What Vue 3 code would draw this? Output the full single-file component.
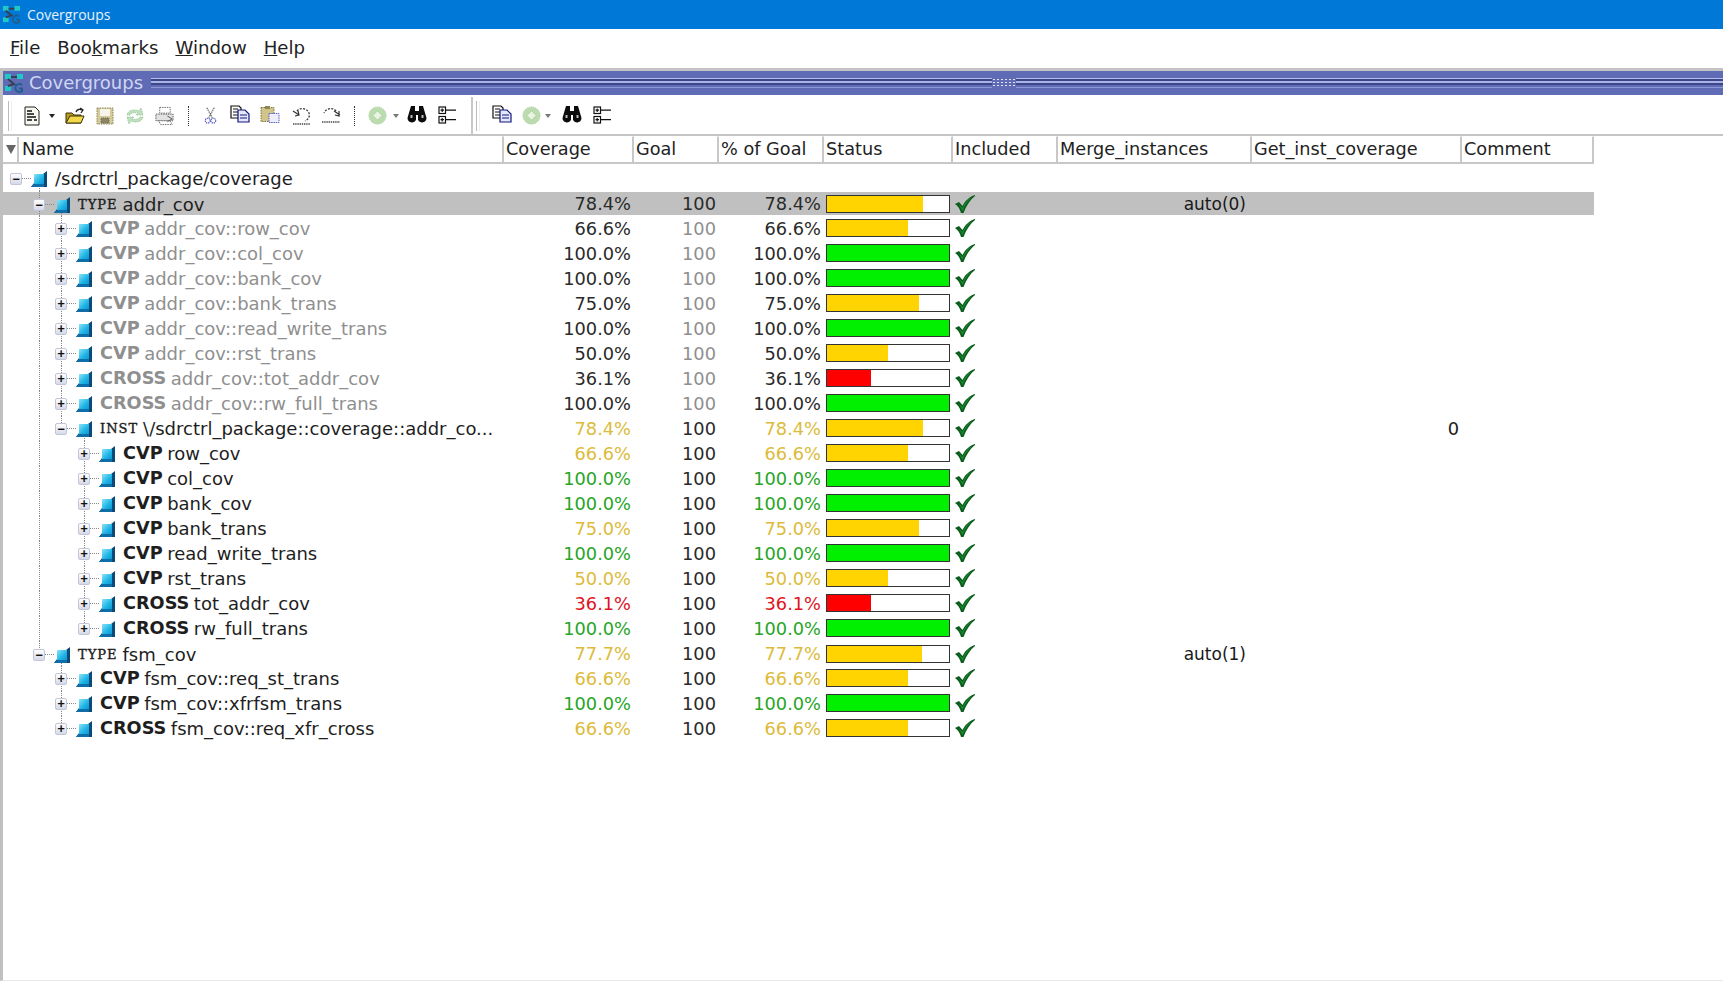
<script setup>
const Y = '#dcbb3a'
const G = '#27a527'
const R = '#e0141c'

// depth, tag, name, coverage, percent, style
const rows = [
  { d: 0, open: true, name: '/sdrctrl_package/coverage', guides: ['g1s'] },
  { d: 1, open: true, tag: 'TYPE', tagSerif: true, name: 'addr_cov', cov: 78.4, selected: true, merge: 'auto(0)', guides: ['g1', 'g2s'] },
  { d: 2, tag: 'CVP', name: 'addr_cov::row_cov', cov: 66.6, dim: true, guides: ['g1', 'g2'] },
  { d: 2, tag: 'CVP', name: 'addr_cov::col_cov', cov: 100, dim: true, guides: ['g1', 'g2'] },
  { d: 2, tag: 'CVP', name: 'addr_cov::bank_cov', cov: 100, dim: true, guides: ['g1', 'g2'] },
  { d: 2, tag: 'CVP', name: 'addr_cov::bank_trans', cov: 75, dim: true, guides: ['g1', 'g2'] },
  { d: 2, tag: 'CVP', name: 'addr_cov::read_write_trans', cov: 100, dim: true, guides: ['g1', 'g2'] },
  { d: 2, tag: 'CVP', name: 'addr_cov::rst_trans', cov: 50, dim: true, guides: ['g1', 'g2'] },
  { d: 2, tag: 'CROSS', name: 'addr_cov::tot_addr_cov', cov: 36.1, dim: true, guides: ['g1', 'g2'] },
  { d: 2, tag: 'CROSS', name: 'addr_cov::rw_full_trans', cov: 100, dim: true, guides: ['g1', 'g2'] },
  { d: 2, open: true, tag: 'INST', tagSerif: true, name: '\\/sdrctrl_package::coverage::addr_co...', cov: 78.4, color: true, inst: '0', guides: ['g1', 'g2e', 'g3s'] },
  { d: 3, tag: 'CVP', name: 'row_cov', cov: 66.6, color: true, guides: ['g1', 'g3'] },
  { d: 3, tag: 'CVP', name: 'col_cov', cov: 100, color: true, guides: ['g1', 'g3'] },
  { d: 3, tag: 'CVP', name: 'bank_cov', cov: 100, color: true, guides: ['g1', 'g3'] },
  { d: 3, tag: 'CVP', name: 'bank_trans', cov: 75, color: true, guides: ['g1', 'g3'] },
  { d: 3, tag: 'CVP', name: 'read_write_trans', cov: 100, color: true, guides: ['g1', 'g3'] },
  { d: 3, tag: 'CVP', name: 'rst_trans', cov: 50, color: true, guides: ['g1', 'g3'] },
  { d: 3, tag: 'CROSS', name: 'tot_addr_cov', cov: 36.1, color: true, guides: ['g1', 'g3'] },
  { d: 3, tag: 'CROSS', name: 'rw_full_trans', cov: 100, color: true, guides: ['g1', 'g3e'] },
  { d: 1, open: true, tag: 'TYPE', tagSerif: true, name: 'fsm_cov', cov: 77.7, color: true, merge: 'auto(1)', guides: ['g1e', 'g2s'] },
  { d: 2, tag: 'CVP', name: 'fsm_cov::req_st_trans', cov: 66.6, color: true, guides: ['g2'] },
  { d: 2, tag: 'CVP', name: 'fsm_cov::xfrfsm_trans', cov: 100, color: true, guides: ['g2'] },
  { d: 2, tag: 'CROSS', name: 'fsm_cov::req_xfr_cross', cov: 66.6, color: true, guides: ['g2e'] },
]

const headers = ['Coverage', 'Goal', '% of Goal', 'Status', 'Included', 'Merge_instances', 'Get_inst_coverage', 'Comment']

function pct(n) {
  return n.toFixed(1) + '%'
}
function barColor(n) {
  if (n >= 100) return '#00f000'
  if (n >= 50) return '#ffd400'
  return '#ff0000'
}
function textColor(n) {
  if (n >= 100) return G
  if (n >= 50) return Y
  return R
}
</script>

<template>
  <div class="app">
    <svg width="0" height="0" class="defs">
      <defs>
        <linearGradient id="cube" x1="0" y1="0" x2="1" y2="1">
          <stop offset="0" stop-color="#8ae4fa" />
          <stop offset="0.6" stop-color="#1fb4e6" />
          <stop offset="1" stop-color="#0f95d0" />
        </linearGradient>
        <symbol id="i-cube" viewBox="0 0 16 16">
          <path d="M0 16 L3 12 L3 3 L12 3 L16 0 L16 16 Z" fill="#0a4a78" />
          <rect x="3" y="3" width="10" height="10" fill="url(#cube)" />
          <path d="M0 16 L3 13 L13 13 L13 16 Z" fill="#0d6ea8" />
        </symbol>
        <symbol id="i-logo" viewBox="0 0 20 20">
          <rect x="1" y="1" width="6" height="5" fill="#1fc7c7" />
          <rect x="13" y="1" width="6" height="5" fill="#1fc7c7" />
          <rect x="1" y="13" width="6" height="5" fill="#1fc7c7" />
          <path d="M7 4 H13 M4 6 L10 11 L4 13" stroke="#3a3f50" stroke-width="2" fill="none" />
          <path d="M18 12 A4 4 0 1 0 18 18 V15.5 H15" stroke="#1f5f8f" stroke-width="2" fill="none" />
        </symbol>
        <symbol id="i-new" viewBox="0 0 18 20">
          <path d="M2 1 H12 L16 5 V19 H2 Z" fill="#f7f7f2" stroke="#222" />
          <path d="M4 5 H9 M4 8 H11 M4 11 H13 M4 14 H9 M11 14 H14" stroke="#111" stroke-width="1.3" />
        </symbol>
        <symbol id="i-folder" viewBox="0 0 20 18">
          <path d="M1 6 H7 L9 8 H16 V16 H1 Z" fill="#b89a1e" stroke="#3a3208" />
          <path d="M1 16 L5 9 H19 L16 16 Z" fill="#f3d94a" stroke="#3a3208" />
          <path d="M11 5 C12 2 15 2 17 3 M15 1 L18 3 L16 6" stroke="#222" stroke-width="1.3" fill="none" />
        </symbol>
        <symbol id="i-save" viewBox="0 0 18 18">
          <rect x="1" y="1" width="16" height="16" fill="#d4cb98" stroke="#8a8358" stroke-dasharray="1.5 1" />
          <rect x="4" y="2" width="10" height="7" fill="#f6f4ea" />
          <rect x="5" y="11" width="8" height="5" fill="#8a8468" stroke="#6d6850" stroke-dasharray="1 1" />
        </symbol>
        <symbol id="i-sync" viewBox="0 0 20 20">
          <path d="M2 9 C3 4 9 3 14 5 L16 2 L18 9 L11 9 L13 7 C9 6 6 7 5 9 Z" fill="#bfe0bf" stroke="#93c193" stroke-dasharray="1.5 .8" stroke-width=".8" />
          <path d="M18 11 C17 16 11 17 6 15 L4 18 L2 11 L9 11 L7 13 C11 14 14 13 15 11 Z" fill="#bfe0bf" stroke="#93c193" stroke-dasharray="1.5 .8" stroke-width=".8" />
        </symbol>
        <symbol id="i-print" viewBox="0 0 22 20">
          <path d="M6 1 H17 V7 H6 Z" fill="#fff" stroke="#666" stroke-dasharray="1.5 1" />
          <path d="M2 8 H20 V15 H2 Z" fill="#e2e2e2" stroke="#555" stroke-dasharray="1.5 1" />
          <path d="M5 15 H17 L19 19 H7 Z" fill="#fff" stroke="#666" stroke-dasharray="1.5 1" />
          <path d="M14 10 L19 13 L14 16" stroke="#555" fill="none" />
        </symbol>
        <symbol id="i-cut" viewBox="0 0 14 20">
          <path d="M3 1 L9 12 M11 1 L5 12" stroke="#555" stroke-dasharray="1.5 .8" stroke-width="1.2" />
          <circle cx="4" cy="15" r="2.6" fill="none" stroke="#4a4fc4" stroke-dasharray="1.4 .8" stroke-width="1.2" />
          <circle cx="10" cy="15" r="2.6" fill="none" stroke="#4a4fc4" stroke-dasharray="1.4 .8" stroke-width="1.2" />
        </symbol>
        <symbol id="i-copy" viewBox="0 0 20 18">
          <path d="M1 1 H9 L11 3 V13 H1 Z" fill="#fff" stroke="#111" stroke-width="1.2" />
          <path d="M3 4 H8 M3 7 H8 M3 10 H8" stroke="#111" />
          <path d="M8 5 H15 L19 9 V17 H8 Z" fill="#e4e8ff" stroke="#15157a" stroke-width="1.2" />
          <path d="M10 10 H17 M10 13 H17" stroke="#15157a" />
        </symbol>
        <symbol id="i-paste" viewBox="0 0 20 18">
          <rect x="1" y="2" width="13" height="14" fill="#d0c488" stroke="#7d7446" stroke-dasharray="1.5 1" />
          <rect x="5" y="0.5" width="5" height="3" fill="#8e8752" />
          <rect x="9" y="8" width="10" height="9" fill="#eef" stroke="#5a5fc4" stroke-dasharray="1.5 .8" />
        </symbol>
        <symbol id="i-undo" viewBox="0 0 20 20">
          <path d="M5 5 C8 1 15 2 17 7 C18 10 17 13 13 15" fill="none" stroke="#333" stroke-width="1.3" stroke-dasharray="2 1.4" />
          <path d="M1 5 L7 9 M3 10 L7 9 L6 5" fill="none" stroke="#333" stroke-width="1.2" />
          <path d="M1 18 H18" stroke="#444" stroke-width="1.4" stroke-dasharray="1.4 .8" />
        </symbol>
        <symbol id="i-redo" viewBox="0 0 20 20">
          <path d="M15 5 C12 1 5 2 3 7" fill="none" stroke="#333" stroke-width="1.3" stroke-dasharray="2 1.4" />
          <path d="M13 5 L19 9 M14 9 L18 10 L18 5" fill="none" stroke="#333" stroke-width="1.2" />
          <path d="M1 16 H19" stroke="#444" stroke-width="1.4" stroke-dasharray="1.4 .8" />
        </symbol>
        <symbol id="i-disc" viewBox="0 0 20 20">
          <circle cx="10" cy="10" r="9" fill="#bcdcb0" stroke="#a6cf9a" stroke-dasharray="1.5 .8" />
          <path d="M10 5 L15 10 L10 15 L5 10 Z" fill="#e9f4e3" stroke="#a6cf9a" />
        </symbol>
        <symbol id="i-find" viewBox="0 0 20 18">
          <path d="M4 1 H8 V6 H12 V1 H16 L19.5 13 A4.5 4.5 0 0 1 11 15 V10 H9 V15 A4.5 4.5 0 0 1 .5 13 Z" fill="#0c0c0c" />
          <rect x="3.5" y="10" width="2" height="3" fill="#bbb" />
          <rect x="14.5" y="10" width="2" height="3" fill="#bbb" />
        </symbol>
        <symbol id="i-tree" viewBox="0 0 18 18">
          <rect x="1" y="1" width="6.5" height="6.5" fill="#fff" stroke="#111" stroke-width="1.2" />
          <rect x="1" y="10.5" width="6.5" height="6.5" fill="#fff" stroke="#111" stroke-width="1.2" />
          <path d="M2.5 4.2 H6 M4.2 2.5 V6 M2.5 13.7 H6 M4.2 12 V15.5 M7.5 4.2 H18 M7.5 13.7 H18" stroke="#111" stroke-width="1.2" />
        </symbol>
      </defs>
    </svg>

    <header class="titlebar">
      <svg class="title-icon"><use href="#i-logo" /></svg>
      <span>Covergroups</span>
    </header>

    <nav class="menubar">
      <span><u>F</u>ile</span>
      <span>Boo<u>k</u>marks</span>
      <span><u>W</u>indow</span>
      <span><u>H</u>elp</span>
    </nav>

    <div class="panel">
      <div class="panel-title">
        <svg class="panel-icon"><use href="#i-logo" /></svg>
        <span class="panel-name">Covergroups</span>
        <div class="drag-lines">
          <div class="grip"></div>
        </div>
      </div>

      <div class="toolbar">
        <div class="tool-group first">
          <div class="handle"></div>
          <svg class="ic ic-new"><use href="#i-new" /></svg>
          <span class="drop dark"></span>
          <svg class="ic ic-folder"><use href="#i-folder" /></svg>
          <svg class="ic ic-save"><use href="#i-save" /></svg>
          <svg class="ic ic-sync"><use href="#i-sync" /></svg>
          <svg class="ic ic-print"><use href="#i-print" /></svg>
          <span class="sep"></span>
          <svg class="ic ic-cut"><use href="#i-cut" /></svg>
          <svg class="ic ic-copy"><use href="#i-copy" /></svg>
          <svg class="ic ic-paste"><use href="#i-paste" /></svg>
          <svg class="ic ic-undo"><use href="#i-undo" /></svg>
          <svg class="ic ic-redo"><use href="#i-redo" /></svg>
          <span class="sep"></span>
          <svg class="ic ic-disc"><use href="#i-disc" /></svg>
          <span class="drop"></span>
          <svg class="ic ic-find"><use href="#i-find" /></svg>
          <svg class="ic ic-tree"><use href="#i-tree" /></svg>
        </div>
        <div class="tool-group second">
          <div class="handle"></div>
          <svg class="ic ic-copy"><use href="#i-copy" /></svg>
          <svg class="ic ic-disc"><use href="#i-disc" /></svg>
          <span class="drop"></span>
          <svg class="ic ic-find"><use href="#i-find" /></svg>
          <svg class="ic ic-tree"><use href="#i-tree" /></svg>
        </div>
      </div>

      <div class="thead">
        <div class="th th-name">
          <span class="sort"></span>
          <span class="th-label">Name</span>
        </div>
        <div v-for="h in headers" :key="h" class="th">{{ h }}</div>
      </div>

      <div class="tbody">
        <div v-for="(r, i) in rows" :key="i" class="row" :class="{ selected: r.selected, dim: r.dim }">
          <i v-for="g in r.guides" :key="g" class="guide" :class="g"></i>
          <div class="cell name" :class="'d' + r.d">
            <span class="exp">{{ r.open ? '−' : '+' }}</span>
            <span class="dash"></span>
            <svg class="cube"><use href="#i-cube" /></svg>
            <span v-if="r.tag" class="tag" :class="{ serif: r.tagSerif }">{{ r.tag }}</span>
            <span class="label">{{ r.name }}</span>
          </div>
          <template v-if="r.cov !== undefined">
            <div class="cell num" :style="r.color ? { color: textColor(r.cov) } : null">{{ pct(r.cov) }}</div>
            <div class="cell num goal">100</div>
            <div class="cell num" :style="r.color ? { color: textColor(r.cov) } : null">{{ pct(r.cov) }}</div>
            <div class="cell status">
              <div class="bar">
                <div class="fill" :style="{ width: r.cov + '%', background: barColor(r.cov) }"></div>
              </div>
            </div>
            <div class="cell included">
              <svg class="check" viewBox="0 0 20 18">
                <path d="M0 9 L4 7 L7.5 11 C10 6 14 2 20 0 L20 1 C15 5 11 11 8.5 18 L6 18 C5 14 3 11 0 9 Z" fill="#0a5c1c" />
                <path d="M3.5 9 L7.5 13 C10 8 13 4 17 2 C13 6 10 10 7.5 16 Z" fill="#1a8a2e" />
              </svg>
            </div>
            <div class="cell merge">{{ r.merge }}</div>
            <div class="cell inst">{{ r.inst }}</div>
            <div class="cell"></div>
          </template>
        </div>
      </div>
    </div>
  </div>
</template>

<style scoped>
.app {
  width: 1723px;
  height: 981px;
  overflow: hidden;
  background: #fff;
  font-family: "DejaVu Sans", sans-serif;
  color: #1a1a1a;
  display: flex;
  flex-direction: column;
}
.defs {
  position: absolute;
}
.titlebar {
  height: 29px;
  background: #0078d7;
  color: #e8f2fb;
  display: flex;
  align-items: center;
  gap: 6px;
  padding-left: 2px;
  font-family: "Open Sans", sans-serif;
  font-size: 14px;
  flex: none;
}
.title-icon {
  width: 19px;
  height: 19px;
}
.menubar {
  height: 37px;
  padding: 0 0 2px 10px;
  display: flex;
  align-items: center;
  gap: 17px;
  font-size: 18.1px;
  flex: none;
  color: #222;
}
.panel {
  flex: 1;
  border-left: 3px solid #c0c0c0;
  border-top: 3px solid #c4c4c4;
  border-bottom: 1px solid #e8e8e8;
  display: flex;
  flex-direction: column;
}
.panel-title {
  height: 24px;
  background: #5f6bb5;
  display: flex;
  align-items: center;
  padding-left: 1px;
  color: #cfd6f2;
  font-size: 18px;
  flex: none;
}
.panel-icon {
  width: 20px;
  height: 20px;
}
.panel-name {
  margin: -2px 0 0 5px;
}
.drag-lines {
  flex: 1;
  height: 10px;
  margin-left: 8px;
  position: relative;
  box-sizing: border-box;
  border-top: 1px solid #b4bcec;
  border-bottom: 1px solid #8d97d8;
  background: linear-gradient(#3d4686 0 2px, #aab3e8 2px 4px, #3d4686 4px 6px, #5f6bb5 6px);
}
.grip {
  position: absolute;
  left: 841px;
  top: -1px;
  width: 24px;
  height: 10px;
  background-color: #5f6bb5;
  background-image: radial-gradient(circle, #dfe3f8 1px, transparent 1px);
  background-size: 4px 3px;
}
.toolbar {
  height: 41px;
  padding-top: 2px;
  display: flex;
  align-items: stretch;
  flex: none;
  border-bottom: 2px solid #c4c4c4;
  box-sizing: border-box;
}
.tool-group {
  display: flex;
  align-items: center;
  position: relative;
}
.first {
  width: 468px;
  border-right: 2px solid #c8c8c8;
  box-sizing: content-box;
}
.second {
  flex: 1;
  margin-left: -2px;
}
.handle {
  width: 2px;
  height: 30px;
  margin-left: 5px;
  border-left: 1px solid #bbb;
  border-right: 1px solid #eee;
}
.ic {
  flex: none;
}
.ic-new { width: 18px; height: 20px; margin-left: 11px; }
.ic-folder { width: 20px; height: 18px; margin-left: 10px; }
.ic-save { width: 18px; height: 18px; margin-left: 11px; }
.ic-sync { width: 20px; height: 20px; margin-left: 11px; }
.ic-print { width: 21px; height: 20px; margin-left: 9px; }
.ic-cut { width: 13px; height: 20px; margin-left: 15px; }
.ic-copy { width: 20px; height: 18px; margin-left: 13px; margin-top: -4px; }
.ic-paste { width: 20px; height: 19px; margin-left: 10px; margin-top: -3px; }
.ic-undo { width: 20px; height: 20px; margin-left: 12px; }
.ic-redo { width: 20px; height: 20px; margin-left: 9px; }
.ic-disc { width: 19px; height: 19px; margin-left: 13px; }
.ic-find { width: 20px; height: 18px; margin-left: 8px; margin-top: -3px; }
.ic-tree { width: 18px; height: 18px; margin-left: 11px; margin-top: -2px; }
.second .ic-copy { margin-left: 12px; }
.second .ic-disc { margin-left: 10px; }
.second .ic-find { margin-left: 11px; }
.drop {
  width: 0;
  height: 0;
  margin-left: 6px;
  border-left: 3px solid transparent;
  border-right: 3px solid transparent;
  border-top: 4px solid #777;
}
.second .drop {
  margin-left: 4px;
}
.drop.dark {
  margin-left: 8px;
  border-top-color: #222;
}
.sep {
  width: 0;
  height: 20px;
  margin-left: 13px;
  border-left: 1px dotted #333;
}
.thead {
  display: grid;
  grid-template-columns: 501px 130px 85px 105px 129px 105px 194px 210px 132px;
  height: 28px;
  width: max-content;
  flex: none;
}
.th {
  border-top: 1px solid #fff;
  border-right: 2px solid #c8c8c8;
  border-bottom: 2px solid #c8c8c8;
  padding-left: 2px;
  font-size: 17.7px;
  line-height: 24px;
  color: #222;
}
.th-name {
  display: flex;
  padding-left: 0;
}
.sort {
  width: 0;
  height: 0;
  margin: 8px 1px 0 3px;
  border-left: 5px solid transparent;
  border-right: 5px solid transparent;
  border-top: 9px solid #666;
}
.th-label {
  padding-left: 3px;
  border-left: 2px solid #c8c8c8;
}
.tbody {
  padding-top: 2px;
  position: relative;
}
.row {
  display: grid;
  grid-template-columns: 501px 130px 85px 105px 129px 105px 194px 210px 132px;
  height: 25px;
  width: max-content;
  position: relative;
  font-size: 17.8px;
  line-height: 25px;
}
.row.selected {
  background: linear-gradient(#fff 0 1px, #c0c0c0 1px 24px, #fff 24px);
}
.guide {
  position: absolute;
  top: 0;
  bottom: 0;
  width: 0;
  border-left: 1px dotted #888;
}
.g1, .g1s, .g1e { left: 36px; }
.g2, .g2s, .g2e { left: 58px; }
.g3, .g3s, .g3e { left: 81px; }
.g1s, .g2s, .g3s { top: 13px; }
.g1e, .g2e, .g3e { bottom: 12px; }
.cell {
  white-space: nowrap;
  position: relative;
}
.name {
  display: flex;
  align-items: center;
  color: #1e1e1e;
  font-size: 18px;
}
.d0 { padding-left: 7px; }
.d1 { padding-left: 30px; }
.d2 { padding-left: 52px; }
.d3 { padding-left: 75px; }
.exp {
  width: 12px;
  height: 12px;
  flex: none;
  box-sizing: border-box;
  border: 1px solid #c2c6d8;
  border-radius: 2px;
  background: linear-gradient(#fff, #d5d9e8);
  color: #111;
  font-size: 12px;
  font-weight: 700;
  line-height: 10px;
  text-align: center;
  font-family: "DejaVu Sans Mono", monospace;
}
.dash {
  width: 9px;
  flex: none;
  border-top: 1px dotted #888;
}
.cube {
  width: 16px;
  height: 16px;
  flex: none;
  margin-right: 8px;
}
.tag {
  font-weight: 700;
  font-size: 17.7px;
  margin-right: 4.5px;
}
.tag.serif {
  font-family: "DejaVu Serif", serif;
  font-weight: 400;
  font-size: 13px;
  letter-spacing: 1px;
  margin-right: 5px;
  -webkit-text-stroke: 0.4px #1e1e1e;
}
.dim .name,
.dim .goal {
  color: #8f8f8f;
}
.num {
  text-align: right;
  padding-right: 3px;
  color: #2a2a2a;
}
.goal {
  color: #2a2a2a;
}
.status {
  display: flex;
  align-items: center;
  padding-left: 2px;
  padding-bottom: 2px;
}
.bar {
  width: 124px;
  height: 18px;
  box-sizing: border-box;
  border: 1.5px solid #333;
  background: #fff;
  overflow: hidden;
}
.fill {
  height: 100%;
}
.included {
  display: flex;
  align-items: center;
  padding-left: 2px;
  padding-bottom: 2px;
}
.check {
  width: 20px;
  height: 18px;
}
.merge {
  padding-right: 6px;
  text-align: right;
  font-size: 17px;
  line-height: 27px;
}
.inst {
  padding-right: 3px;
  text-align: right;
}
</style>

<style>
html, body {
  margin: 0;
  background: #fff;
}
</style>
